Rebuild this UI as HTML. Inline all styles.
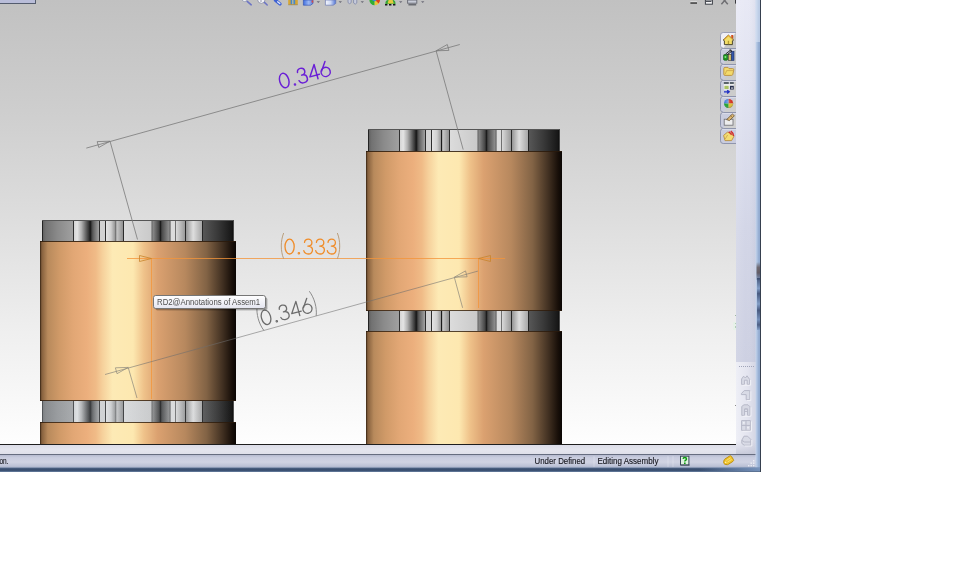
<!DOCTYPE html>
<html>
<head>
<meta charset="utf-8">
<title>Assem1</title>
<style>
html,body{margin:0;padding:0;background:#fff;width:960px;height:576px;overflow:hidden;font-family:"Liberation Sans",sans-serif;}
svg{display:block;position:absolute;left:0;top:0;}
text{font-family:"Liberation Sans",sans-serif;}
</style>
</head>
<body>
<svg width="960" height="576" viewBox="0 0 960 576">
<defs>
  <linearGradient id="bg" x1="0" y1="0" x2="0" y2="1">
    <stop offset="0" stop-color="#c1c1c1"/>
    <stop offset="0.25" stop-color="#cecece"/>
    <stop offset="0.5" stop-color="#dedede"/>
    <stop offset="0.75" stop-color="#efefef"/>
    <stop offset="1" stop-color="#fefefe"/>
  </linearGradient>
  <!-- copper body gradient, objectBoundingBox over 196px width -->
  <linearGradient id="cu" x1="0" y1="0" x2="1" y2="0">
    <stop offset="0" stop-color="#5c4028"/>
    <stop offset="0.012" stop-color="#8a6440"/>
    <stop offset="0.04" stop-color="#b88a5c"/>
    <stop offset="0.10" stop-color="#d09a68"/>
    <stop offset="0.17" stop-color="#e2a775"/>
    <stop offset="0.24" stop-color="#ecaf7d"/>
    <stop offset="0.285" stop-color="#f0bb87"/>
    <stop offset="0.32" stop-color="#f6d19c"/>
    <stop offset="0.37" stop-color="#fdeab5"/>
    <stop offset="0.475" stop-color="#fde8b0"/>
    <stop offset="0.53" stop-color="#efc28a"/>
    <stop offset="0.60" stop-color="#dba170"/>
    <stop offset="0.74" stop-color="#b7885e"/>
    <stop offset="0.85" stop-color="#826345"/>
    <stop offset="0.93" stop-color="#423122"/>
    <stop offset="0.98" stop-color="#180f09"/>
    <stop offset="1" stop-color="#0a0604"/>
  </linearGradient>
  <!-- gray knurled ring, 191 wide x 21 tall, drawn at origin -->
  <linearGradient id="k1" x1="0" x2="1"><stop offset="0" stop-color="#5c5c5c"/><stop offset="0.12" stop-color="#727272"/><stop offset="0.5" stop-color="#8a8a8a"/><stop offset="1" stop-color="#a0a0a0"/></linearGradient>
  <linearGradient id="k2" x1="0" x2="1"><stop offset="0" stop-color="#cfcfcf"/><stop offset="0.25" stop-color="#e4e4e4"/><stop offset="0.5" stop-color="#b0b0b0"/><stop offset="0.85" stop-color="#4a4a4a"/><stop offset="1" stop-color="#222"/></linearGradient>
  <linearGradient id="k3" x1="0" x2="1"><stop offset="0" stop-color="#2c2c2c"/><stop offset="0.4" stop-color="#666"/><stop offset="1" stop-color="#a8a8a8"/></linearGradient>
  <linearGradient id="k4" x1="0" x2="1"><stop offset="0" stop-color="#e6e6e6"/><stop offset="0.3" stop-color="#d0d0d0"/><stop offset="0.58" stop-color="#8a8a8a"/><stop offset="0.62" stop-color="#c8c8c8"/><stop offset="1" stop-color="#8c8c8c"/></linearGradient>
  <linearGradient id="k5" x1="0" x2="1"><stop offset="0" stop-color="#dcdcdc"/><stop offset="1" stop-color="#cacaca"/></linearGradient>
  <linearGradient id="k6" x1="0" x2="1"><stop offset="0" stop-color="#a0a0a0"/><stop offset="1" stop-color="#333"/></linearGradient>
  <linearGradient id="k7" x1="0" x2="1"><stop offset="0" stop-color="#3c3c3c"/><stop offset="1" stop-color="#9c9c9c"/></linearGradient>
  <linearGradient id="k8" x1="0" x2="1"><stop offset="0" stop-color="#dedede"/><stop offset="1" stop-color="#969696"/></linearGradient>
  <linearGradient id="k9" x1="0" x2="1"><stop offset="0" stop-color="#909090"/><stop offset="0.45" stop-color="#dedede"/><stop offset="1" stop-color="#a4a4a4"/></linearGradient>
  <linearGradient id="k10" x1="0" x2="1"><stop offset="0" stop-color="#585858"/><stop offset="0.5" stop-color="#383838"/><stop offset="1" stop-color="#131313"/></linearGradient>
  <g id="ring">
    <rect x="0" y="0" width="191" height="22" fill="#777"/>
    <rect x="0" y="0" width="31" height="22" fill="url(#k1)"/>
    <rect x="31" y="0" width="17" height="22" fill="url(#k2)"/>
    <rect x="48" y="0" width="9.5" height="22" fill="url(#k3)"/>
    <rect x="57.5" y="0" width="6" height="22" fill="#d2d2d2"/>
    <rect x="63.5" y="0" width="18" height="22" fill="url(#k4)"/>
    <rect x="81.5" y="0" width="27.5" height="22" fill="url(#k5)"/>
    <rect x="109" y="0" width="9.5" height="22" fill="url(#k6)"/>
    <rect x="118.5" y="0" width="10" height="22" fill="url(#k7)"/>
    <rect x="128.5" y="0" width="5" height="22" fill="#dcdcdc"/>
    <rect x="133.5" y="0" width="10" height="22" fill="url(#k8)"/>
    <rect x="143.5" y="0" width="17" height="22" fill="url(#k9)"/>
    <rect x="160.5" y="0" width="31" height="22" fill="url(#k10)"/>
    <g stroke="#1c1c1c" stroke-width="0.9">
      <line x1="0.5" y1="0" x2="0.5" y2="22"/>
      <line x1="31.5" y1="0" x2="31.5" y2="22"/>
      <line x1="48.5" y1="0" x2="48.5" y2="22" stroke-width="1.4"/>
      <line x1="57.5" y1="0" x2="57.5" y2="22"/>
      <line x1="63.5" y1="0" x2="63.5" y2="22"/>
      <line x1="81.5" y1="0" x2="81.5" y2="22"/>
      <line x1="118.5" y1="0" x2="118.5" y2="22" stroke-width="1.4"/>
      <line x1="133.5" y1="0" x2="133.5" y2="22" stroke="#666"/>
      <line x1="73.8" y1="0" x2="73.8" y2="22" opacity="0.35"/>
      <line x1="110.3" y1="0" x2="110.3" y2="22" opacity="0.3"/>
      <line x1="128" y1="0" x2="128" y2="22" opacity="0.5"/>
      <line x1="143.5" y1="0" x2="143.5" y2="22"/>
      <line x1="160.5" y1="0" x2="160.5" y2="22"/>
      <line x1="191" y1="0" x2="191" y2="22" stroke="#111"/>
    </g>
    <line x1="0" y1="0.5" x2="191.5" y2="0.5" stroke="#555" stroke-width="1"/>
  </g>

  <!-- thin geometric digits, box 10.2 x 14.8, baseline y=0 -->
  <g id="g0"><ellipse cx="5.1" cy="-7.4" rx="4.6" ry="7.4"/></g>
  <g id="gd"><circle cx="1.6" cy="-0.7" r="0.75" stroke-width="1.1"/></g>
  <g id="g3"><path d="M1.3,-11.6 C1.6,-13.6 3,-14.8 5,-14.8 C7.2,-14.8 8.7,-13.4 8.7,-11.3 C8.7,-9.2 7.2,-7.9 4.6,-7.9 C7.6,-7.9 9.3,-6.3 9.3,-3.9 C9.3,-1.5 7.5,0 5,0 C2.8,0 1.1,-1.2 0.6,-3.3"/></g>
  <g id="g4"><path d="M7.6,0 L7.6,-14.8 L0.3,-4 L10.2,-4"/></g>
  <g id="g6"><path d="M7.2,-14.8 L1.5,-6.6"/><circle cx="5.1" cy="-4.6" r="4.6"/></g>
  <g id="gl"><path d="M2.6,-20.6 C-0.4,-13 -0.4,-3 2.6,4.4"/></g>
  <g id="gr"><path d="M0.4,-20.6 C3.4,-13 3.4,-3 0.4,4.4"/></g>

  <linearGradient id="band" x1="0" y1="0" x2="0" y2="1"><stop offset="0" stop-color="#dcdde8"/><stop offset="0.5" stop-color="#e4e5ee"/><stop offset="1" stop-color="#dfe0ea"/></linearGradient>
  <linearGradient id="panelV" x1="0" y1="0" x2="0" y2="1"><stop offset="0" stop-color="#e8e9f5"/><stop offset="0.2" stop-color="#e1e3f1"/><stop offset="0.5" stop-color="#d3d6e7"/><stop offset="0.8" stop-color="#cdd0e2"/><stop offset="1" stop-color="#cdd0e2"/></linearGradient>
  <linearGradient id="panelH" x1="0" y1="0" x2="1" y2="0"><stop offset="0" stop-color="#fff" stop-opacity="0.12"/><stop offset="0.5" stop-color="#fff" stop-opacity="0"/><stop offset="1" stop-color="#8088a8" stop-opacity="0.10"/></linearGradient>
  <linearGradient id="tbH" x1="0" y1="0" x2="1" y2="0"><stop offset="0" stop-color="#eeeff6"/><stop offset="0.6" stop-color="#e3e4ef"/><stop offset="1" stop-color="#d3d5e3"/></linearGradient>
  <linearGradient id="tbBot" x1="0" y1="0" x2="0" y2="1"><stop offset="0" stop-color="#c8cada" stop-opacity="0"/><stop offset="1" stop-color="#c0c3d4" stop-opacity="0.8"/></linearGradient>
  <linearGradient id="sb" x1="0" y1="0" x2="0" y2="1"><stop offset="0" stop-color="#b6bbd0"/><stop offset="0.2" stop-color="#c9cddf"/><stop offset="0.55" stop-color="#d0d3e3"/><stop offset="0.85" stop-color="#bcc2d6"/><stop offset="1" stop-color="#a4adc6"/></linearGradient>
  <linearGradient id="bordH" x1="0" y1="0" x2="1" y2="0"><stop offset="0" stop-color="#c8d6ec"/><stop offset="0.3" stop-color="#b0c4e2"/><stop offset="0.6" stop-color="#98b0d4"/><stop offset="1" stop-color="#8ca6cc"/></linearGradient>
  <linearGradient id="bordB" x1="0" y1="0" x2="0" y2="1"><stop offset="0" stop-color="#6b7f9f"/><stop offset="0.3" stop-color="#3a4f70"/><stop offset="0.7" stop-color="#3c5274"/><stop offset="1" stop-color="#6f86a6"/></linearGradient>
  <linearGradient id="bordBR" x1="0" y1="0" x2="1" y2="0"><stop offset="0" stop-color="#7f9cc6" stop-opacity="0"/><stop offset="1" stop-color="#7f9cc6" stop-opacity="0.85"/></linearGradient>
  <linearGradient id="blot" x1="0" y1="0" x2="0" y2="1"><stop offset="0" stop-color="#2e3e62"/><stop offset="0.2" stop-color="#7c98c2"/><stop offset="0.3" stop-color="#34446a"/><stop offset="0.5" stop-color="#7c98c2"/><stop offset="0.62" stop-color="#34446a"/><stop offset="0.8" stop-color="#6d88b4"/><stop offset="0.9" stop-color="#3a4a70"/><stop offset="1" stop-color="#7f9cc6"/></linearGradient>
  <linearGradient id="tip" x1="0" y1="0" x2="0" y2="1"><stop offset="0" stop-color="#ffffff"/><stop offset="1" stop-color="#e4e5f0"/></linearGradient>
  <radialGradient id="ballSh" cx="0.4" cy="0.3" r="0.8"><stop offset="0" stop-color="#fff" stop-opacity="0.35"/><stop offset="0.5" stop-color="#fff" stop-opacity="0"/><stop offset="1" stop-color="#000" stop-opacity="0.45"/></radialGradient>
  <linearGradient id="cubeB" x1="0" y1="0" x2="1" y2="0"><stop offset="0" stop-color="#3f6fe0"/><stop offset="0.55" stop-color="#9db8f2"/><stop offset="1" stop-color="#5e7fd8"/></linearGradient>
  <linearGradient id="cubeW" x1="0" y1="0" x2="1" y2="0"><stop offset="0" stop-color="#f4f6fc"/><stop offset="0.5" stop-color="#cdd8f4"/><stop offset="1" stop-color="#4f74d6"/></linearGradient>
  <linearGradient id="blotBr" x1="0" y1="0" x2="0" y2="1"><stop offset="0" stop-color="#5a4844" stop-opacity="0"/><stop offset="0.3" stop-color="#5a4844" stop-opacity="0.7"/><stop offset="0.6" stop-color="#54464a" stop-opacity="0.8"/><stop offset="1" stop-color="#3a4466" stop-opacity="0.3"/></linearGradient>
  <linearGradient id="lowTint" x1="0" y1="0" x2="1" y2="0"><stop offset="0" stop-color="#c8d4e0" stop-opacity="0.28"/><stop offset="0.2" stop-color="#c8d4e0" stop-opacity="0.2"/><stop offset="0.8" stop-color="#c8d4e0" stop-opacity="0.08"/><stop offset="1" stop-color="#c8d4e0" stop-opacity="0"/></linearGradient>
  <filter id="noop" x="-5%" y="-50%" width="110%" height="200%"><feOffset dx="0" dy="0"/></filter>
</defs>

<!-- viewport background -->
<rect x="0" y="0" width="736" height="444" fill="url(#bg)"/>

<!-- LEFT cylinder -->
<use href="#ring" x="42" y="220"/>
<use href="#ring" x="42" y="400"/>
<rect x="42" y="400" width="191" height="22" fill="url(#lowTint)"/>
<rect x="40" y="241" width="196" height="160" fill="url(#cu)"/>
<rect x="40" y="422" width="196" height="22" fill="url(#cu)"/>
<g fill="#2a1a0c">
  <rect x="40" y="241" width="196" height="1" opacity="0.85"/>
  <rect x="40" y="400" width="196" height="1" opacity="0.8"/>
  <rect x="40" y="422" width="196" height="1" opacity="0.8"/>
  <rect x="40" y="241" width="1" height="160" opacity="0.45"/>
  <rect x="40" y="422" width="1" height="22" opacity="0.45"/>
</g>

<!-- RIGHT cylinder -->
<use href="#ring" x="368" y="129"/>
<use href="#ring" x="368" y="310"/>
<g stroke="#1a1a1a" stroke-width="1">
  <line x1="441.5" y1="130" x2="441.5" y2="151"/>
  <line x1="441.5" y1="311" x2="441.5" y2="331"/>
        </g>
<rect x="366" y="151" width="196" height="160" fill="url(#cu)"/>
<rect x="366" y="331" width="196" height="113" fill="url(#cu)"/>
<g fill="#2a1a0c">
  <rect x="366" y="151" width="196" height="1" opacity="0.85"/>
  <rect x="366" y="310" width="196" height="1" opacity="0.8"/>
  <rect x="366" y="331" width="196" height="1" opacity="0.8"/>
  <rect x="366" y="151" width="1" height="160" opacity="0.45"/>
  <rect x="366" y="331" width="1" height="113" opacity="0.45"/>
</g>

<!-- DIMENSIONS -->
<g id="dims" fill="none" stroke-linecap="butt">
  <!-- upper gray dimension -->
  <g stroke="#7a7a7a" stroke-width="0.8">
    <line x1="86.3" y1="148.1" x2="459.8" y2="44.5"/>
    <line x1="110" y1="141.2" x2="137.5" y2="239.5"/>
    <line x1="436.1" y1="50.8" x2="463.2" y2="149.6"/>
    <path d="M110,141.2 L98.8,147.5 L97.2,141.6 Z"/>
    <path d="M436.1,50.8 L447.3,44.5 L448.9,50.4 Z"/>
  </g>
  <!-- orange dimension -->
  <g stroke="#f3953a" stroke-width="0.85" opacity="0.92">
    <line x1="127" y1="258.5" x2="505" y2="258.5"/>
    <line x1="151.5" y1="258.5" x2="151.5" y2="399"/>
    <line x1="478.5" y1="258.5" x2="478.5" y2="308"/>
  </g>
  <g stroke="#c8842c" stroke-width="0.8">
    <path d="M151.5,258.5 L139.5,261.5 L139.5,255.5 Z"/>
    <path d="M478.5,258.5 L490.5,261.5 L490.5,255.5 Z"/>
  </g>
  <!-- lower gray dimension -->
  <g stroke="#6e6e6e" stroke-width="0.75" opacity="0.75">
    <line x1="105" y1="374.5" x2="477.9" y2="271.1"/>
    <line x1="128.2" y1="367.4" x2="137" y2="398"/>
    <line x1="454.3" y1="277.2" x2="462.6" y2="307.8"/>
    <path d="M128.2,367.4 L117,373.7 L115.4,367.8 Z"/>
    <path d="M454.3,277.2 L465.5,270.9 L467.1,276.8 Z"/>
  </g>
</g>

<!-- DIMENSION TEXT -->
<g fill="none" stroke-linecap="round" stroke-linejoin="round">
  <g transform="translate(281.3,89) rotate(-15.5)" stroke="#6a1fd6" stroke-width="1.45">
    <use href="#g0" x="0"/><use href="#gd" x="12.8"/><use href="#g3" x="18.7"/><use href="#g4" x="30.5"/><use href="#g6" x="42.2"/>
  </g>
  <g transform="translate(284.5,254)">
    <g stroke="#f08c28" stroke-width="1.3">
      <use href="#g0" x="0"/><use href="#gd" x="12.8"/><use href="#g3" x="18.7"/><use href="#g3" x="30.6"/><use href="#g3" x="42.2"/>
    </g>
    <g stroke="#b49672" stroke-width="0.9">
      <use href="#gl" x="-3.6"/><use href="#gr" x="52.6"/>
    </g>
  </g>
  <g transform="translate(263.1,325.8) rotate(-15.5)">
    <g stroke="#6c6c6c" stroke-width="1.3">
      <use href="#g0" x="0"/><use href="#gd" x="12.8"/><use href="#g3" x="18.7"/><use href="#g4" x="30.5"/><use href="#g6" x="42.2"/>
    </g>
    <g stroke="#8a8a8a" stroke-width="0.9">
      <use href="#gl" x="-3.2"/><use href="#gr" x="53.5"/>
    </g>
  </g>
</g>

<!-- bottom chrome -->
<rect x="0" y="444" width="736" height="1" fill="#1e1e1e"/>
<rect x="0" y="445" width="736" height="9" fill="url(#band)"/>

<!-- right panel -->
<rect x="736" y="0" width="20" height="454" fill="url(#panelV)"/>
<rect x="736" y="0" width="20" height="454" fill="url(#panelH)"/>
<rect x="736" y="362" width="20" height="92" fill="url(#tbH)"/>
<rect x="736" y="440" width="20" height="14" fill="url(#tbBot)"/>
<g fill="#a0a4b8">
  <rect x="739" y="366" width="1" height="1"/><rect x="741" y="366" width="1" height="1"/><rect x="743" y="366" width="1" height="1"/><rect x="745" y="366" width="1" height="1"/><rect x="747" y="366" width="1" height="1"/><rect x="749" y="366" width="1" height="1"/><rect x="751" y="366" width="1" height="1"/><rect x="753" y="366" width="1" height="1"/>
</g>

<!-- status bar -->
<rect x="0" y="454" width="756" height="1" fill="#666d80"/>
<rect x="0" y="455" width="756" height="13" fill="url(#sb)"/>

<!-- window border -->
<rect x="755.5" y="0" width="5" height="472" fill="url(#bordH)"/>
<rect x="755.5" y="0" width="5" height="42" fill="#dfe8f6" opacity="0.55"/>
<rect x="0" y="467.5" width="761" height="4.5" fill="url(#bordB)"/>
<rect x="700" y="467.5" width="60" height="3.5" fill="url(#bordBR)"/>
<rect x="760" y="0" width="1" height="472" fill="#36404f"/>
<rect x="756.5" y="262" width="3.5" height="18" fill="url(#blotBr)"/>
<rect x="757" y="278" width="3" height="52" fill="url(#blot)" opacity="0.8"/>

<!-- status bar content -->
<g font-size="8.7" fill="#16171f" stroke="#16171f" stroke-width="0.15" filter="url(#noop)">
  <text x="-0.6" y="464.2" textLength="9" lengthAdjust="spacingAndGlyphs">on.</text>
  <text x="534.6" y="464.2" textLength="50.6" lengthAdjust="spacingAndGlyphs">Under Defined</text>
  <text x="597.4" y="464.2" textLength="61" lengthAdjust="spacingAndGlyphs">Editing Assembly</text>
</g>
<g fill="#eef0f8" opacity="0.32">
  <rect x="593.5" y="456" width="1" height="11"/>
  <rect x="667.5" y="456" width="1" height="11"/>
  <rect x="672.5" y="456" width="1" height="11"/>
</g>
<!-- help icon -->
<rect x="680.5" y="456.2" width="8.4" height="8.8" fill="#dff2df" stroke="#3a485a" stroke-width="1"/>
<rect x="681" y="464.6" width="8.6" height="0.9" fill="#2c3848" opacity="0.7"/>
<path d="M683.1,458.9 Q683.3,457.5 684.8,457.5 Q686.5,457.5 686.5,458.9 Q686.5,459.9 685.2,460.5 Q684.8,460.8 684.8,461.6" fill="none" stroke="#0c9a10" stroke-width="1.5"/>
<rect x="684" y="462.5" width="1.6" height="1.5" fill="#0c9a10"/>
<!-- tag icon -->
<g transform="translate(728.2,460.7) rotate(-33) scale(0.9)">
  <path d="M-5.6,0 Q-5.6,-1.2 -4.4,-2.2 L-3.2,-3.2 Q-2.8,-3.5 -2,-3.5 L4,-3.5 Q5.6,-3.5 5.6,-1.9 L5.6,1.9 Q5.6,3.5 4,3.5 L-2,3.5 Q-2.8,3.5 -3.2,3.2 L-4.4,2.2 Q-5.6,1.2 -5.6,0 Z" fill="#f0c42c" stroke="#bd8e12" stroke-width="1"/>
  <path d="M-1.5,-1.3 L3.9,-1.3 M-1.5,0.9 L3.9,0.9" stroke="#f9e07a" stroke-width="0.9" fill="none"/>
  <circle cx="-3.3" cy="0" r="0.8" fill="#fff2b8"/>
</g>
<!-- resize grip -->
<g fill="#f4f6fb" opacity="0.8">
  <rect x="753" y="460" width="1.4" height="1.4"/>
  <rect x="750.5" y="462.5" width="1.4" height="1.4"/><rect x="753" y="462.5" width="1.4" height="1.4"/>
  <rect x="748" y="465" width="1.4" height="1.4"/><rect x="750.5" y="465" width="1.4" height="1.4"/><rect x="753" y="465" width="1.4" height="1.4"/>
</g>

<!-- tooltip -->
<rect x="155.5" y="297.5" width="112" height="13" rx="2" fill="#000" opacity="0.22"/>
<rect x="154.8" y="296.8" width="112" height="13" rx="2" fill="#000" opacity="0.14"/>
<rect x="153.5" y="295.5" width="112" height="13" rx="2.2" fill="url(#tip)" stroke="#767676" stroke-width="1"/>
<text x="157" y="305" font-size="8.5" fill="#4e4e4e" filter="url(#noop)" textLength="103.2" lengthAdjust="spacingAndGlyphs">RD2@Annotations of Assem1</text>

<!-- right side tabs -->
<g>
    <path d="M736,32.5 L723.2,32.5 Q720.5,32.5 720.5,35.2 L720.5,45.6 Q720.5,48.2 723.2,48.2" fill="#efeff7" stroke="#9ba0b8" stroke-width="1"/>
  <path d="M736,48.5 L723.2,48.5 Q720.5,48.5 720.5,51.2 L720.5,61.6 Q720.5,64.2 723.2,64.2" fill="#c9ccde" stroke="#8f95ad" stroke-width="1"/>
  <rect x="722" y="49" width="14" height="1" fill="#dfe1ee" opacity="0.7"/>
  <path d="M736,64.5 L723.2,64.5 Q720.5,64.5 720.5,67.2 L720.5,77.6 Q720.5,80.2 723.2,80.2" fill="#c9ccde" stroke="#8f95ad" stroke-width="1"/>
  <rect x="722" y="65" width="14" height="1" fill="#dfe1ee" opacity="0.7"/>
  <path d="M736,80.5 L723.2,80.5 Q720.5,80.5 720.5,83.2 L720.5,93.6 Q720.5,96.2 723.2,96.2" fill="#c9ccde" stroke="#8f95ad" stroke-width="1"/>
  <rect x="722" y="81" width="14" height="1" fill="#dfe1ee" opacity="0.7"/>
  <path d="M736,96.5 L723.2,96.5 Q720.5,96.5 720.5,99.2 L720.5,109.6 Q720.5,112.2 723.2,112.2" fill="#c9ccde" stroke="#8f95ad" stroke-width="1"/>
  <rect x="722" y="97" width="14" height="1" fill="#dfe1ee" opacity="0.7"/>
  <path d="M736,112.5 L723.2,112.5 Q720.5,112.5 720.5,115.2 L720.5,125.6 Q720.5,128.2 723.2,128.2" fill="#c9ccde" stroke="#8f95ad" stroke-width="1"/>
  <rect x="722" y="113" width="14" height="1" fill="#dfe1ee" opacity="0.7"/>
  <path d="M736,128.5 L723.2,128.5 Q720.5,128.5 720.5,131.2 L720.5,140.8 Q720.5,143.5 723.2,143.5 L736,143.5" fill="#c9ccde" stroke="#8f95ad" stroke-width="1"/>
  <rect x="722" y="129" width="14" height="1" fill="#dfe1ee" opacity="0.7"/>
  <!-- 1 house -->
  <path d="M731.2,35 L733.2,35 L733.2,39 L731.2,37.5 Z" fill="#d4501c"/>
  <path d="M723.2,40 L728.4,35.2 L733.6,40 L732.4,40.8 L732.4,44.6 L724.4,44.6 L724.4,40.8 Z" fill="#f3de6a" stroke="#3e3a24" stroke-width="0.9" stroke-linejoin="round"/>
  <path d="M724,39.6 L728.4,35.6 L732.8,39.6" fill="none" stroke="#e0a838" stroke-width="1.1"/>
  <rect x="727.8" y="40.8" width="1.3" height="3.4" fill="#b49a30"/>
  <!-- 2 config mgr -->
  <rect x="723.6" y="54.6" width="4" height="5.6" rx="0.8" fill="#1f9a22" stroke="#0e5a14" stroke-width="0.7"/>
  <rect x="724.6" y="56" width="1.6" height="2" fill="#7fe07c"/>
  <rect x="728.4" y="54.4" width="2.8" height="6" fill="#d9c46a" stroke="#3a3a30" stroke-width="0.6"/>
  <rect x="731.6" y="51.4" width="2.4" height="9" fill="#3556a8" stroke="#1c2c60" stroke-width="0.6"/>
  <path d="M725.6,54 L730.6,50.2 M727,54.8 L731.6,51.4 M729.4,50 L731.2,50 L731,51.8" stroke="#1a1a1a" stroke-width="0.9" fill="none"/>
  <!-- 3 folder -->
  <path d="M723.8,68.6 Q723.8,67.4 725,67.4 L728,67.4 L729,68.6 L732.6,68.6 Q733.8,68.6 733.8,69.8 L732.8,74.4 Q732.6,75.4 731.4,75.4 L725,75.4 Q723.8,75.4 723.8,74.2 Z" fill="#f3da6c" stroke="#b98f3e" stroke-width="0.9"/>
  <path d="M725.2,74.2 L726.6,70.6 L733.2,70.6" fill="none" stroke="#c9a14a" stroke-width="0.8"/>
  <!-- 4 table -->
  <rect x="723.8" y="82" width="10" height="7.6" fill="#f4f4f6"/>
  <rect x="723.8" y="82" width="10" height="2.2" fill="#59636a"/>
  <rect x="724.4" y="85.6" width="4.4" height="3.4" fill="#a9c262"/>
  <rect x="729.8" y="85.6" width="4" height="4" fill="#28304e"/>
  <rect x="731" y="87.6" width="2" height="0.9" fill="#fff"/>
  <rect x="728.8" y="82" width="1" height="7.6" fill="#e8e8ee"/>
  <rect x="723.8" y="84.4" width="10" height="1" fill="#fafafa"/>
  <path d="M724,91.8 L728.8,91.8 M727.2,90.2 L729.2,91.8 L727.2,93.4" stroke="#1f2ec4" stroke-width="1.3" fill="none"/>
  <!-- 5 colour ball -->
  <g>
    <path d="M728.6,103.5 L728.6,98.9 A4.6,4.6 0 0 0 724,103.5 Z" fill="#3576d6"/>
    <path d="M728.6,103.5 L733.2,103.5 A4.6,4.6 0 0 0 728.6,98.9 Z" fill="#d3301f"/>
    <path d="M728.6,103.5 L724,103.5 A4.6,4.6 0 0 0 728.6,108.1 Z" fill="#22a232"/>
    <path d="M728.6,103.5 L728.6,108.1 A4.6,4.6 0 0 0 733.2,103.5 Z" fill="#e2c234"/>
    <circle cx="728.6" cy="103.5" r="4.6" fill="url(#ballSh)"/>
  </g>
  <!-- 6 brush + box -->
  <rect x="724.2" y="119.2" width="8.8" height="6" fill="#ededee" stroke="#6d6d72" stroke-width="0.8"/>
  <path d="M726.6,119.6 L732.4,114 L734.4,115.8 L729.4,120.6 Z" fill="#dcb672" stroke="#5a4524" stroke-width="0.7"/>
  <path d="M730.2,115.4 L732.6,117.6" stroke="#8a6a34" stroke-width="0.7"/>
  <!-- 7 yellow pentagon + red -->
  <path d="M723.6,135.4 L727.4,132.2 L731.4,133.4 L733.8,136.6 L731.6,140.6 L725,140.6 Z" fill="#f3dc72" stroke="#b98f3e" stroke-width="0.9" stroke-linejoin="round"/>
  <path d="M725.2,139 L727.6,135" stroke="#c9a14a" stroke-width="0.8"/>
  <path d="M728.8,131.6 L731.6,134.8 M730.8,131 L733.4,134 M732.4,132.4 L733.8,136" stroke="#d43030" stroke-width="1.3" fill="none"/>
</g>

<!-- top-left box -->
<rect x="0" y="0" width="35" height="3" fill="#b9bdd9"/>
<rect x="0" y="3" width="36" height="1" fill="#545c6e"/>
<rect x="35" y="0" width="1" height="4" fill="#545c6e"/>

<!-- top toolbar icons (clipped at top) -->
<g>
  <!-- zoom 1 -->
  <path d="M242,0 Q244.5,3.2 247.4,0" fill="#eef0f6" stroke="#9aa0b4" stroke-width="0.9"/>
  <path d="M247.2,1.4 L251.2,4.8" stroke="#6c74c4" stroke-width="1.6" stroke-linecap="round"/>
  <!-- zoom 2 -->
  <path d="M257.6,0 Q258,3.4 261.4,3.4 Q264.8,3.4 265,0" fill="#f2f3f8" stroke="#8e93a6" stroke-width="0.9"/>
  <path d="M261,0 L261,2" stroke="#8a8fa4" stroke-width="0.9"/>
  <path d="M264.4,2.4 L267.2,5" stroke="#6c74c4" stroke-width="1.5" stroke-linecap="round"/>
  <!-- blue clip -->
  <path d="M275.4,0.2 L280,4" stroke="#3f62d4" stroke-width="3.2" stroke-linecap="round"/>
  <path d="M277.6,1.8 L279.8,3.6" stroke="#dfe8fb" stroke-width="1.3" stroke-linecap="round"/>
  <!-- book -->
  <rect x="288.2" y="0" width="9.6" height="4.6" fill="#d6a632"/>
  <rect x="290.6" y="0" width="4.6" height="4.2" fill="#4a86c6"/>
  <rect x="292.4" y="0" width="0.9" height="4.4" fill="#e8d48a"/>
  <rect x="288.2" y="4.4" width="9.6" height="0.8" fill="#8a6a20" opacity="0.6"/>
  <!-- cube 1 -->
  <path d="M303.4,0 L303.4,5.2 L310.6,5.2 L313,3.4 L313,0 Z" fill="url(#cubeB)" stroke="#3b59b4" stroke-width="0.7"/>
  <rect x="311.6" y="0.4" width="1.6" height="2.2" fill="#d24a4a"/>
  <path d="M316.6,1.2 L320,1.2 L318.3,3 Z" fill="#6c6c78"/>
  <!-- cube 2 -->
  <path d="M325.4,0 L325.4,5.2 L333.2,5.2 L335.8,3.4 L335.8,0 Z" fill="url(#cubeW)" stroke="#6a78b0" stroke-width="0.7"/>
  <path d="M338.6,1.2 L342,1.2 L340.3,3 Z" fill="#6c6c78"/>
  <!-- glasses -->
  <path d="M348,0 L348,2.6 Q349.6,4.8 351.2,2.6 L351.2,0 M353.6,0 L353.6,3 Q355.2,5.4 356.8,3 L356.8,0" fill="#c6cadc" stroke="#8c93ae" stroke-width="1"/>
  <path d="M360.6,1.2 L364,1.2 L362.3,3 Z" fill="#6c6c78"/>
  <!-- colour wheel -->
  <g>
    <path d="M369.4,0 A5.3,5.3 0 0 0 374.7,5.3 L374.7,0 Z" fill="#2fae36"/>
    <path d="M374.7,5.3 A5.3,5.3 0 0 0 380,0 L374.7,0 Z" fill="#e8c83a"/>
    <path d="M374.7,0 L380,0 A5.3,5.3 0 0 1 378.6,3.4 L375.6,0.6 Z" fill="#df4120"/>
    <path d="M371.8,0 L376.6,0 L374.8,1.6 Z" fill="#3c86e2"/>
  </g>
  <!-- scene -->
  <path d="M385.4,4 Q385.2,0.6 387.6,0 L393.6,0 Q395.8,0.8 395.6,4 Z" fill="#3aa63a"/>
  <path d="M388.6,0 L392.6,0 L393.8,3.6 L387.6,3.6 Z" fill="#e6c83e"/>
  <path d="M385,4.8 L396,4.8" stroke="#16161a" stroke-width="1.5" stroke-dasharray="2.4 1.6"/>
  <path d="M399,1.2 L402.4,1.2 L400.7,3 Z" fill="#6c6c78"/>
  <!-- monitor -->
  <rect x="407.6" y="0" width="9.2" height="3.2" fill="#c8ccd8" stroke="#6c6e78" stroke-width="1"/>
  <rect x="408.4" y="4.2" width="7.8" height="1.2" fill="#55575f"/>
  <path d="M421,1.2 L424.4,1.2 L422.7,3 Z" fill="#6c6c78"/>
</g>

<!-- window controls -->
<rect x="690.4" y="1.4" width="6.6" height="0.9" fill="#f2f2f2" opacity="0.8"/>
<rect x="690.4" y="2.3" width="6.6" height="1.5" fill="#3e3e3e"/>
<rect x="705.4" y="0" width="7" height="4.2" fill="#f4f4f6" stroke="#3c4048" stroke-width="1"/>
<rect x="706" y="0.9" width="5.4" height="1" fill="#3c4048"/>
<path d="M721.4,4.2 L724.6,0.6 L727.8,4.2" fill="none" stroke="#6e6e72" stroke-width="1.5"/>
<rect x="723.6" y="0" width="2" height="1" fill="#6e6e72"/>
<rect x="735" y="0" width="1" height="3.6" fill="#3a3a3e"/>

<!-- greyed toolbar icons lower right -->
<g fill="none" stroke="#b7b9c8" stroke-width="1" stroke-linejoin="round">
  <path d="M741.6,384.4 L741.6,379 L743.6,376.2 L745.4,378 L747,375.8 L749.6,379.4 L749.6,384.4 L747.2,384.4 L747.2,380.2 L744.4,380.2 L744.4,384.4 Z" fill="#d9dbe6"/>
  <path d="M741.4,393.6 L744.2,390.6 L749.8,390.6 L749.8,399.6 L746.2,399.6 L746.2,394.6 L741.4,394.6 Z" fill="#d9dbe6"/>
  <path d="M741.8,415.4 L741.8,406.4 L744,404.8 L748,404.8 L750,406.8 L750,415.4 L747.6,415.4 L747.6,409 L744.6,409 L744.6,415.4 Z" fill="#d6d8e3"/>
  <path d="M744.6,409 L747.6,409 M744.6,411.4 L747.6,411.4" />
  <rect x="741.6" y="420.6" width="8.8" height="9.8" fill="#d9dbe6"/>
  <path d="M741.6,425.4 L750.4,425.4 M746,420.6 L746,430.4"/>
  <rect x="743" y="422" width="1.6" height="1.6" fill="#eef0f6" stroke="none"/>
  <rect x="747.2" y="426.8" width="1.6" height="1.6" fill="#eef0f6" stroke="none"/>
  <path d="M741.8,440.2 L744,436.2 L747.6,436.2 L750.8,439.4 L750.8,445.2 L744.2,445.2 L741.8,443.4 Z" fill="#d9dbe6"/>
  <path d="M741.8,440.4 L744.6,442 L750.8,442"/>
</g>
<g fill="none" stroke="#f8f9fc" stroke-width="0.8" opacity="0.9">
  <path d="M750.6,379.8 L750.6,385.2 L742.4,385.2"/>
  <path d="M750.8,391.2 L750.8,400.4 L747,400.4"/>
  <path d="M751,407.2 L751,416.2 L742.6,416.2"/>
  <path d="M751.4,421.4 L751.4,431.2 L742.4,431.2"/>
  <path d="M751.8,440 L751.8,446 L744.6,446"/>
</g>
<rect x="735" y="405" width="1" height="1" fill="#8a8a8a"/>
<g fill="#5f8f66" opacity="0.55"><rect x="735" y="315" width="1" height="1"/><rect x="735" y="323" width="1" height="1"/><rect x="735" y="326" width="1" height="2"/></g>
<rect x="733" y="322" width="3" height="8" fill="#d9f5df" opacity="0.35"/>
</svg>
</body>
</html>
